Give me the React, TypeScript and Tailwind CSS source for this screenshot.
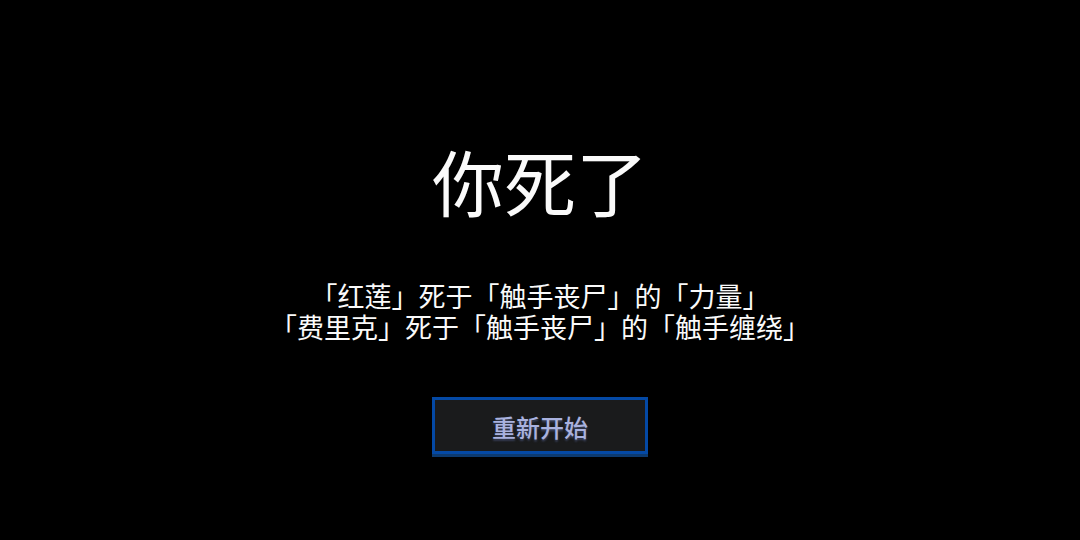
export default function App() {
  return (
    <main className="flex min-h-screen flex-col items-center bg-black pt-32 text-center font-['Noto_Sans_CJK_SC',sans-serif] text-[#fafafa]">
      <h1 className="text-[72px] leading-[104px]">你死了</h1>
      <p className="mt-12 text-[27px] leading-[31px]">
        「红莲」死于「触手丧尸」的「力量」
        <br />
        「费里克」死于「触手丧尸」的「触手缠绕」
      </p>
      <button
        type="button"
        className="mt-[55px] w-[216px] border-3 border-[#0449a5] bg-[#1a1b1c] pt-[11px] pb-2 text-2xl leading-8 font-medium text-[#a9b2df] shadow-[0_3px_0_#0c3a70] [text-shadow:0_2px_2px_#39415c]"
      >
        重新开始
      </button>
    </main>
  );
}
